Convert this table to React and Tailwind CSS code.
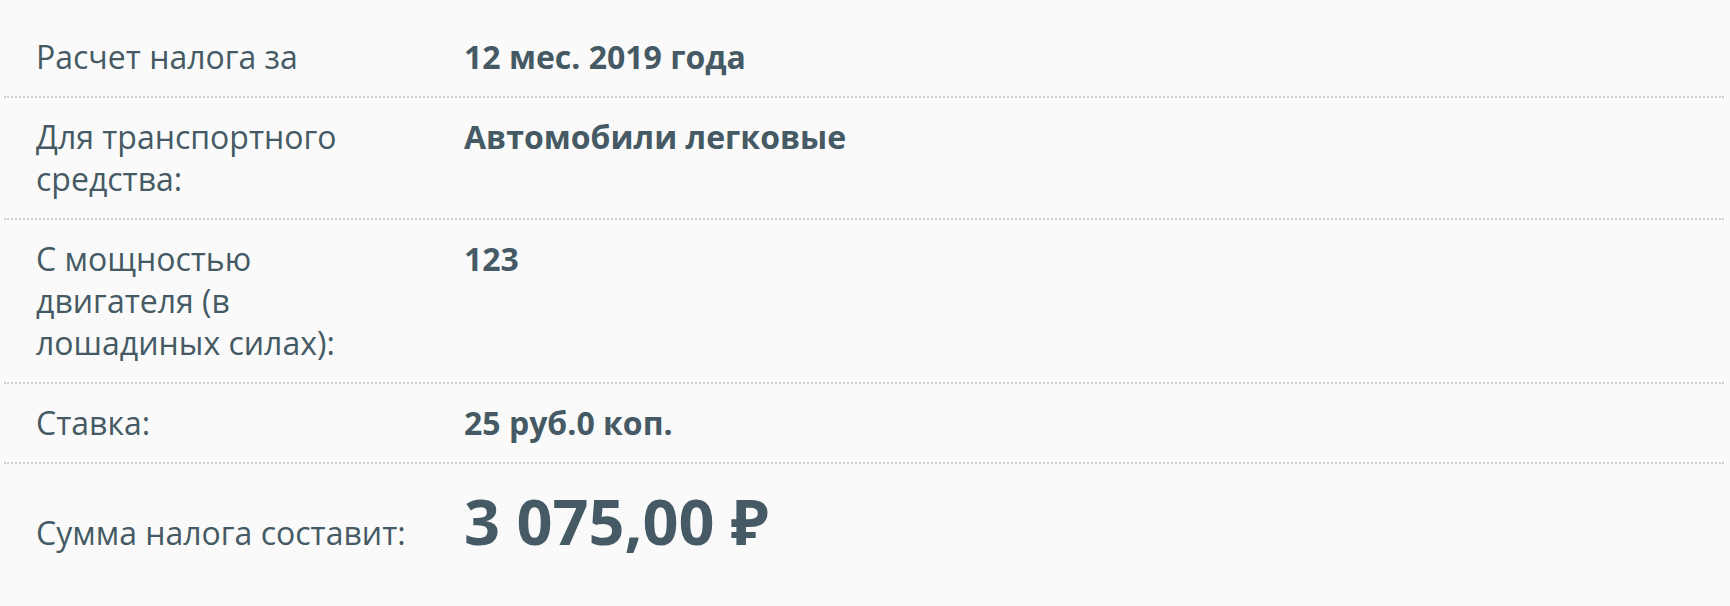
import React from 'react';

const rows = [
  { label: 'Расчет налога за', value: '12 мес. 2019 года' },
  { label: 'Для транспортного средства:', value: 'Автомобили легковые' },
  { label: 'С мощностью двигателя (в лошадиных силах):', value: '123' },
  { label: 'Ставка:', value: '25 руб.0 коп.' },
];

const Row = ({ label, value }) => (
  <div className="flex items-start border-b-2 border-dotted border-[#cfcfcf] pl-[32px] py-[18px]">
    <div className="w-[428px] shrink-0">
      <div className="max-w-[330px]">{label}</div>
    </div>
    <div className="font-bold">{value}</div>
  </div>
);

export default function App() {
  return (
    <div
      className="min-h-screen bg-[#fafafa] text-[#455a64] text-[32px] leading-[42px]"
      style={{ fontFamily: '"Open Sans", "Noto Sans", sans-serif' }}
    >
      <div className="ml-[4px] w-[1720px] pt-[18px]">
        {rows.map((r) => (
          <Row key={r.label} label={r.label} value={r.value} />
        ))}

        {/* итог */}
        <div className="flex items-baseline pl-[32px] pt-[25px] pb-[40px]">
          <div className="w-[428px] shrink-0 whitespace-nowrap">Сумма налога составит:</div>
          <div className="font-bold text-[63px] leading-[64px]">3 075,00 ₽</div>
        </div>
      </div>
    </div>
  );
}
